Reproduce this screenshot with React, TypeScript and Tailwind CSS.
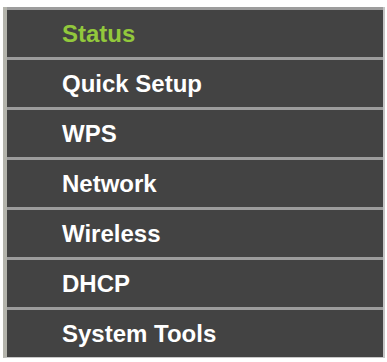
const items = ["Status", "Quick Setup", "WPS", "Network", "Wireless", "DHCP", "System Tools"];

export default function App() {
  return (
    <div className="min-h-screen bg-white pl-[3px] pt-[7px]" style={{ fontFamily: '"Liberation Sans", Arial, sans-serif' }}>
      <ul className="w-[382px] border-l-[4px] border-r-[2px] border-b border-l-[#b4b4ac] border-r-[#c4c4c4] border-b-[#c8c8c8] bg-[#434343]">
        {items.map((label, i) => (
          <li
            key={label}
            className="flex h-[50px] items-center border-t-[3px] border-[#9c9c9c] pl-[55px]"
          >
            <span className={`text-[24px] font-bold ${i === 0 ? "text-[#92c83c]" : "text-white"}`}>
              {label}
            </span>
          </li>
        ))}
      </ul>
    </div>
  );
}
